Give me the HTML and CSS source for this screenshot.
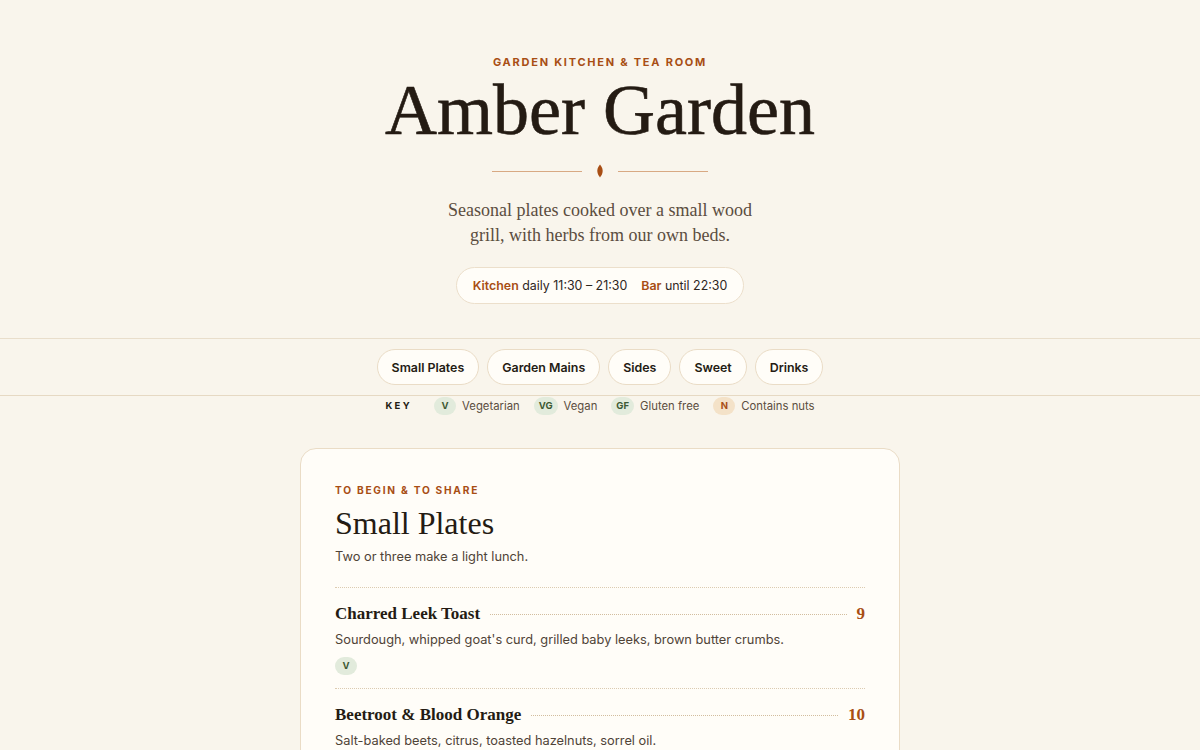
FILE: index.html
```html
<!DOCTYPE html>
<html lang="en">
<head>
<meta charset="utf-8">
<title>Amber Garden</title>
<link rel="stylesheet" href="styles.css">
</head>
<body>
<header class="hero">
  <p class="eyebrow">Garden Kitchen &amp; Tea Room</p>
  <h1 class="title">Amber Garden</h1>
  <div class="divider">
    <span class="rule"></span>
    <svg class="leaf" width="8" height="14" viewBox="0 0 8 14"><path d="M4 0.5 C6.2 3 7 5.5 6.6 8 C6.2 10.5 5 12 4 13.5 C3 12 1.8 10.5 1.4 8 C1 5.5 1.8 3 4 0.5 Z" fill="#a84e14"/></svg>
    <span class="rule"></span>
  </div>
  <p class="lede">Seasonal plates cooked over a small wood grill, with herbs from our own beds.</p>
  <div class="hours">
    <span><b>Kitchen</b> daily 11:30 – 21:30</span>
    <span><b>Bar</b> until 22:30</span>
  </div>
</header>

<nav class="tabs">
  <a class="tab" href="#small">Small Plates</a>
  <a class="tab" href="#mains">Garden Mains</a>
  <a class="tab" href="#sides">Sides</a>
  <a class="tab" href="#sweet">Sweet</a>
  <a class="tab" href="#drinks">Drinks</a>
</nav>

<div class="key">
  <span class="key-label">Key</span>
  <span class="key-item"><span class="tag">V</span>Vegetarian</span>
  <span class="key-item"><span class="tag">VG</span>Vegan</span>
  <span class="key-item"><span class="tag">GF</span>Gluten free</span>
  <span class="key-item"><span class="tag tag-nut">N</span>Contains nuts</span>
</div>

<main class="menu">
  <section class="card" id="small">
    <p class="card-eyebrow">To begin &amp; to share</p>
    <h2 class="card-title">Small Plates</h2>
    <p class="card-note">Two or three make a light lunch.</p>
    <ul class="items">
      <li class="item">
        <div class="item-head">
          <span class="item-name">Charred Leek Toast</span>
          <span class="leader"></span>
          <span class="price">9</span>
        </div>
        <p class="item-desc">Sourdough, whipped goat's curd, grilled baby leeks, brown butter crumbs.</p>
        <div class="item-tags"><span class="tag">V</span></div>
      </li>
      <li class="item">
        <div class="item-head">
          <span class="item-name">Beetroot &amp; Blood Orange</span>
          <span class="leader"></span>
          <span class="price">10</span>
        </div>
        <p class="item-desc">Salt-baked beets, citrus, toasted hazelnuts, sorrel oil.</p>
        <div class="item-tags"><span class="tag">VG</span><span class="tag">GF</span><span class="tag tag-nut">N</span></div>
      </li>
    </ul>
  </section>
</main>
</body>
</html>
```

FILE: styles.css
```css
* { box-sizing: border-box; }
html, body { margin: 0; padding: 0; }
body {
  background: #f9f5ec;
  color: #241b13;
  font-family: "Inter", "Liberation Sans", sans-serif;
}
p { margin: 0; }

.hero {
  text-align: center;
  padding: 55px 0 34px;
  border-bottom: 1px solid #e9decb;
}
.eyebrow {
  font-size: 11px;
  line-height: 14px;
  font-weight: 700;
  letter-spacing: 0.16em;
  text-transform: uppercase;
  color: #a84e14;
}
.title {
  margin: 4px 0 0;
  font-family: "Liberation Serif", serif;
  font-weight: 400;
  font-size: 72px;
  line-height: 74px;
  color: #241b13;
  -webkit-text-stroke: 0.6px #241b13;
}
.divider {
  display: flex;
  align-items: center;
  justify-content: center;
  gap: 14px;
  margin-top: 14px;
  height: 20px;
}
.rule {
  width: 90px;
  height: 1px;
  background: #d8a983;
}
.leaf { display: block; }
.lede {
  margin: 17px auto 0;
  max-width: 330px;
  font-family: "Liberation Serif", serif;
  font-size: 18px;
  line-height: 25px;
  color: #5b4d40;
}
.hours {
  display: inline-flex;
  gap: 14px;
  margin-top: 19px;
  padding: 10px 16px;
  border: 1px solid #ecdfcb;
  border-radius: 999px;
  background: #fffdf8;
  font-size: 12.4px;
  line-height: 15px;
  color: #2f261e;
}
.hours b { color: #a84e14; font-weight: 600; }

.tabs {
  display: flex;
  justify-content: center;
  gap: 8px;
  padding: 10px 0;
  border-bottom: 1px solid #e6d9c3;
  background: #f9f5ec;
}
.tab {
  display: block;
  padding: 9.5px 14px;
  border: 1px solid #eadcc6;
  border-radius: 999px;
  background: #fffdf8;
  color: #241b13;
  font-size: 12.4px;
  line-height: 15px;
  font-weight: 600;
  text-decoration: none;
}

.key {
  display: flex;
  justify-content: center;
  align-items: center;
  gap: 14px;
  padding-top: 1px;
  font-size: 11.3px;
  line-height: 18px;
  color: #5b4d40;
}
.key-label {
  font-size: 9.5px;
  font-weight: 700;
  letter-spacing: 0.25em;
  text-transform: uppercase;
  color: #241b13;
  margin-right: 8px;
}
.key-item { display: inline-flex; align-items: center; gap: 6px; }
.tag {
  display: inline-block;
  min-width: 22px;
  height: 18px;
  padding: 0 5px;
  border-radius: 999px;
  background: #e2ebdc;
  color: #3e5a34;
  font-size: 9.5px;
  line-height: 18px;
  font-weight: 700;
  text-align: center;
}
.tag-nut { background: #f4e2c8; color: #a84e14; }

.menu {
  display: flex;
  justify-content: center;
  padding: 33px 0 40px;
}
.card {
  width: 600px;
  padding: 34px 34px 20px;
  background: #fffdf8;
  border: 1px solid #eadcc6;
  border-radius: 16px;
}
.card-eyebrow {
  font-size: 10.2px;
  line-height: 14px;
  font-weight: 700;
  letter-spacing: 0.17em;
  text-transform: uppercase;
  color: #a84e14;
}
.card-title {
  margin: 7px 0 0;
  font-family: "Liberation Serif", serif;
  font-weight: 400;
  font-size: 32px;
  line-height: 38px;
  color: #241b13;
}
.card-note {
  margin-top: 5px;
  font-size: 12.8px;
  line-height: 20px;
  color: #4f4337;
}
.items {
  list-style: none;
  margin: 20px 0 0;
  padding: 0;
}
.item {
  padding: 14px 0 13px;
  border-top: 1px dotted #dccbb1;
}
.item-head {
  display: flex;
  align-items: baseline;
  gap: 10px;
}
.item-name {
  font-family: "Liberation Serif", serif;
  font-weight: 700;
  font-size: 17px;
  line-height: 24px;
  color: #241b13;
}
.leader {
  flex: 1;
  border-bottom: 1px dotted #d2bd9e;
  transform: translateY(-4px);
}
.price {
  font-family: "Liberation Serif", serif;
  font-weight: 700;
  font-size: 17px;
  line-height: 24px;
  color: #a84e14;
}
.item-desc {
  margin-top: 4px;
  font-size: 12.8px;
  line-height: 20px;
  color: #4f4337;
}
.item-tags {
  display: flex;
  gap: 6px;
  margin-top: 7px;
}
```
